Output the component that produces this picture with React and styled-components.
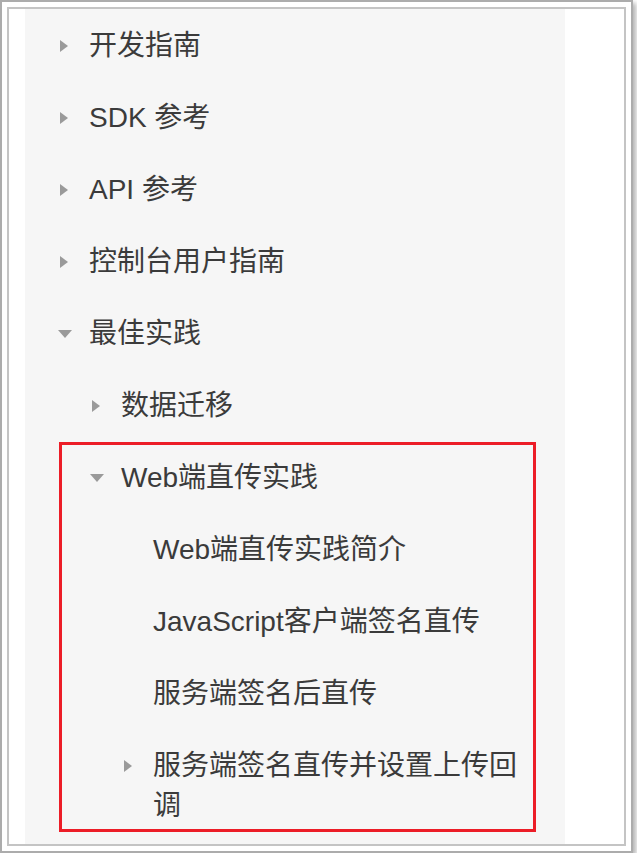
import React from 'react';
import styled, { createGlobalStyle } from 'styled-components';

const GlobalStyle = createGlobalStyle`
  body {
    margin: 0;
    background: #fff;
    font-family: "Liberation Sans", "Noto Sans CJK SC", sans-serif;
  }
`;

const nav = [
  { label: '开发指南', state: 'closed' },
  { label: 'SDK 参考', state: 'closed' },
  { label: 'API 参考', state: 'closed' },
  { label: '控制台用户指南', state: 'closed' },
  { label: '最佳实践', state: 'open' },
  { label: '数据迁移', state: 'closed', level: 1 },
];

const highlighted = [
  { label: 'Web端直传实践', state: 'open', level: 1 },
  { label: 'Web端直传实践简介', level: 2 },
  { label: 'JavaScript客户端签名直传', level: 2 },
  { label: '服务端签名后直传', level: 2 },
  { label: '服务端签名直传并设置上传回调', state: 'closed', level: 2 },
];

const NavItem = ({ label, state, level = 0, offset = 0 }) => (
  <Row $indent={31 + level * 32 - offset}>
    <Caret>{state && <Arrow $open={state === 'open'} />}</Caret>
    <Label>{label}</Label>
  </Row>
);

const App = () => (
  <>
    <GlobalStyle />
    <Frame>
      <Inner>
        <Panel>
          {nav.map((item) => (
            <NavItem key={item.label} {...item} />
          ))}
          <Marked>
            {highlighted.map((item) => (
              <NavItem key={item.label} {...item} offset={34} />
            ))}
          </Marked>
        </Panel>
      </Inner>
    </Frame>
  </>
);

const Frame = styled.div`
  width: 633px;
  height: 853px;
  box-sizing: border-box;
  padding: 5px;
  border: 2px solid #acacac;
  box-shadow: 3px 3px 5px rgba(0, 0, 0, 0.3);
`;

const Inner = styled.div`
  height: 100%;
  box-sizing: border-box;
  padding-left: 16px;
  border: 2px solid #c4c4c4;
  background: #fff;
  overflow: hidden;
`;

const Panel = styled.nav`
  width: 540px;
  height: 100%;
  box-sizing: border-box;
  padding-top: 1px;
  background: #f6f6f6;
`;

const Marked = styled.div`
  width: 477px;
  margin-left: 34px;
  box-shadow: inset 0 0 0 3px #ec1d27;

  & > div:last-child {
    padding-bottom: 6px;
  }
`;

const Row = styled.div`
  display: flex;
  align-items: flex-start;
  padding: 16px 0 16px ${(p) => p.$indent}px;
`;

const Caret = styled.span`
  flex: 0 0 33px;
  height: 40px;
  display: flex;
  align-items: center;
`;

const Arrow = styled.span`
  width: 0;
  height: 0;
  ${(p) =>
    p.$open
      ? `
    margin-left: 2px;
    border-left: 7px solid transparent;
    border-right: 7px solid transparent;
    border-top: 8px solid #9a9a9a;
  `
      : `
    margin-left: 4px;
    border-top: 6.5px solid transparent;
    border-bottom: 6.5px solid transparent;
    border-left: 8px solid #9a9a9a;
  `}
`;

const Label = styled.span`
  font-size: 28px;
  line-height: 40px;
  color: #3b3b3b;
`;

export default App;
